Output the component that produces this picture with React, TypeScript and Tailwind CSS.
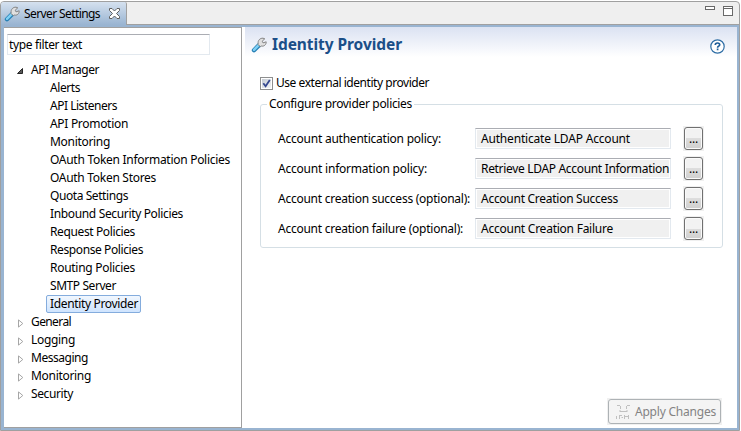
import { useLayoutEffect, useRef } from "react";

function Txt({ children, w, className = "" }: { children: string; w: number; className?: string }) {
  const ref = useRef<HTMLSpanElement>(null);
  useLayoutEffect(() => {
    const el = ref.current;
    if (!el) return;
    el.style.letterSpacing = "0px";
    const natural = el.getBoundingClientRect().width;
    el.style.letterSpacing = `${(w - natural) / children.length}px`;
  }, [children, w]);
  return (
    <span ref={ref} className={`inline-block whitespace-pre ${className}`}>
      {children}
    </span>
  );
}

function Wrench({ className = "" }: { className?: string }) {
  return (
    <svg viewBox="0 0 16 16" className={`h-4 w-4 shrink-0 ${className}`} fill="none">
      <path d="M3 13.2 8.6 7.6" stroke="#2680b5" strokeWidth="4.4" strokeLinecap="round" />
      <path d="M3 12.8 8.2 7.6" stroke="#7fd0f5" strokeWidth="2.4" strokeLinecap="round" />
      <path
        d="M7.2 6.6C6.6 3.5 9 1 12 1.2L13.8 1.8 11.2 4.2 12 5.9 15.2 4.8C15.4 7.6 13 9.8 10.2 9L9.4 9.6 6.6 7.2Z"
        fill="#e0e0e0"
        stroke="#858585"
        strokeWidth="1"
      />
    </svg>
  );
}

const children: [string, number][] = [
  ["Alerts", 30],
  ["API Listeners", 67],
  ["API Promotion", 78],
  ["Monitoring", 60],
  ["OAuth Token Information Policies", 180],
  ["OAuth Token Stores", 106],
  ["Quota Settings", 78],
  ["Inbound Security Policies", 133],
  ["Request Policies", 85],
  ["Response Policies", 93],
  ["Routing Policies", 85],
  ["SMTP Server", 66],
];

const roots: [string, number][] = [
  ["General", 40],
  ["Logging", 44],
  ["Messaging", 57],
  ["Monitoring", 60],
  ["Security", 42],
];

const policies: [string, number, string, number][] = [
  ["Account authentication policy:", 163, "Authenticate LDAP Account", 149],
  ["Account information policy:", 149, "Retrieve LDAP Account Information", 188],
  ["Account creation success (optional):", 192, "Account Creation Success", 137],
  ["Account creation failure (optional):", 185, "Account Creation Failure", 132],
];

function Tree() {
  return (
    <ul className="mt-[6px]">
      <li className="flex h-[18px] items-center pl-[13px]">
        <svg className="mt-px h-[6px] w-[6px]" viewBox="0 0 6 6">
          <path d="M5.5 0.5V5.5H0.5Z" fill="#595959" stroke="#262626" />
        </svg>
        <Txt w={68} className="ml-[8px]">API Manager</Txt>
      </li>
      {children.map(([t, w]) => (
        <li key={t} className="flex h-[18px] items-center pl-[46px]">
          <Txt w={w}>{t}</Txt>
        </li>
      ))}
      <li className="flex h-[18px] items-center pl-[42px]">
        <span className="flex h-[18px] w-[95px] items-center rounded-[2px] border border-[#84acdd] bg-linear-to-b from-[#f1f7fe] to-[#cfe4fe] pl-[3px]">
          <Txt w={88}>Identity Provider</Txt>
        </span>
      </li>
      {roots.map(([t, w]) => (
        <li key={t} className="flex h-[18px] items-center pl-[14px]">
          <svg className="mt-[3px] h-[9px] w-[6px]" viewBox="0 0 6 9">
            <path d="M0.5 0.9V8.1L4.8 4.5Z" fill="#fff" stroke="#a6a6a6" />
          </svg>
          <Txt w={w} className="ml-[7px]">{t}</Txt>
        </li>
      ))}
    </ul>
  );
}

export default function App() {
  return (
    <div className="h-[431px] w-[741px] bg-white pt-px pr-px font-['Noto_Sans',sans-serif] text-[12px] leading-[18px] text-black">
      <div className="flex h-[430px] w-[740px] flex-col overflow-hidden rounded-t-[4px] border border-[#a0a0a0] bg-[#efefef]">
        <header className="flex h-[23px] shrink-0">
          <div className="flex w-[126px] items-center rounded-tr-[2px] border-r border-[#a0a0a0] bg-linear-to-b from-[#d5e1ef] to-[#99b4d1] pl-[3px]">
            <Wrench className="mt-px" />
            <Txt w={76} className="ml-[4px]">Server Settings</Txt>
            <svg className="ml-[9px] h-[11px] w-[11px]" viewBox="0 0 11 11">
              <path d="M.5 .5H3L5.5 3 8 .5H10.5V2.5L7.5 5.5 10.5 8.5V10.5H8L5.5 8 3 10.5H.5V8.5L3.5 5.5 .5 2.5Z" fill="#fff" stroke="#606060" />
            </svg>
          </div>
          <div className="flex flex-1 items-start justify-end gap-[8px] border-b border-[#a0a0a0] pt-[4px] pr-[6px]">
            <span className="h-[4px] w-[10px] border border-[#696969] bg-white" />
            <span className="h-[10px] w-[10px] border border-[#696969] bg-white">
              <span className="mt-px block h-px bg-[#696969]" />
            </span>
          </div>
        </header>
        <div className="flex min-h-0 flex-1">
          <div className="flex flex-1 border-x-[3px] border-y-2 border-r-2 border-[#99b4d1] bg-white">
            <aside className="w-[238px] shrink-0 border-t border-r border-b border-[#a0a0a0]">
              <div className="mt-[6px] ml-[3px] flex h-[21px] w-[203px] items-center border border-[#e3e9ef] border-t-[#abadb3] bg-white pl-px">
                <Txt w={73}>type filter text</Txt>
              </div>
              <Tree />
            </aside>
            <main className="ml-[3px] flex flex-1 flex-col">
              <div className="flex h-[30px] shrink-0 bg-linear-to-b from-[#dbe2f2] to-white pl-[6px]">
                <Wrench className="mt-[10px]" />
                <Txt w={130} className="ml-[5px] mt-[6px] text-[15.5px] leading-[22px] font-bold text-[#1b4f88]">Identity Provider</Txt>
                <svg className="mt-[12px] mr-[12px] ml-auto h-[15px] w-[15px] shrink-0" viewBox="0 0 15 15">
                  <circle cx="7.5" cy="7.5" r="6.7" fill="#fff" stroke="#2f6ea5" strokeWidth="1.2" />
                  <path d="M5.3 6Q5.3 4 7.5 4T9.7 5.7Q9.7 6.7 8.5 7.3 7.6 7.8 7.6 8.7M7.6 9.6V11.3" fill="none" stroke="#205f9a" strokeWidth="1.7" />
                </svg>
              </div>
              <label className="mt-[17px] ml-[15px] flex h-[18px] items-center">
                <span className="flex h-[13px] w-[13px] items-center justify-center border border-[#8e8f8f] bg-white">
                  <span className="flex h-[9px] w-[9px] items-center justify-center bg-linear-to-br from-[#c5cbd3] to-[#f4f5f6]">
                    <svg className="h-[9px] w-[9px]" viewBox="0 0 9 9">
                      <path d="M1.3 4.2 3.6 7.2 7.8 .9" fill="none" stroke="#35478f" strokeWidth="1.8" />
                    </svg>
                  </span>
                </span>
                <Txt w={153} className="ml-[3px]">Use external identity provider</Txt>
              </label>
              <fieldset className="mt-[3px] ml-[15px] h-[153px] w-[463px] rounded-[3px] border border-[#d5dfe5]">
                <legend className="ml-[6px] h-[18px] px-[2px]">
                  <Txt w={143}>Configure provider policies</Txt>
                </legend>
                <div className="mt-[11px] flex flex-col">
                  {policies.map(([a, aw, b, bw]) => (
                    <div key={a} className="flex h-[30px] items-center pl-[17px]">
                      <span className="w-[197px] shrink-0">
                        <Txt w={aw}>{a}</Txt>
                      </span>
                      <span className="mb-px flex h-[21px] w-[196px] shrink-0 items-center border border-[#e3e9ef] border-t-[#abadb3] bg-[#f0f0f0] pl-[5px] shadow-[inset_0_0_0_1px_white]">
                        <Txt w={bw}>{b}</Txt>
                      </span>
                      <span className="mb-px ml-[12px] bg-[#f0f0f0] p-px">
                        <button className="flex h-[23px] w-[19px] items-center justify-center rounded-[3px] border border-[#707070] bg-linear-to-b from-[#f2f2f2] from-50% via-[#dddddd] via-50% to-[#cfcfcf] shadow-[inset_0_0_0_1px_#fafafa]">
                          <Txt w={9}>...</Txt>
                        </button>
                      </span>
                    </div>
                  ))}
                </div>
              </fieldset>
              <div className="mt-auto mr-[15px] mb-[3px] self-end bg-[#f0f0f0] p-px">
                <button className="flex h-[25px] w-[113px] items-center rounded-[3px] border border-[#adb2b5] bg-[#f4f4f4] pl-[7px] text-[#838383]">
                  <svg className="h-4 w-4" viewBox="0 0 16 16" fill="none" stroke="#c0c0c0">
                    <path d="M1 1.5H4M11 1.5H14M4.5 2V5M10.5 2V5M4 7.5H11M4 6V8M11 6V8M.5 12V15M3.5 11V15M3.5 11.5H6M5.5 13.5H7M8.5 11V15M8.5 12.5H12M12.5 11V15" />
                  </svg>
                  <Txt w={81} className="ml-[3px]">Apply Changes</Txt>
                </button>
              </div>
            </main>
          </div>
        </div>
      </div>
    </div>
  );
}
